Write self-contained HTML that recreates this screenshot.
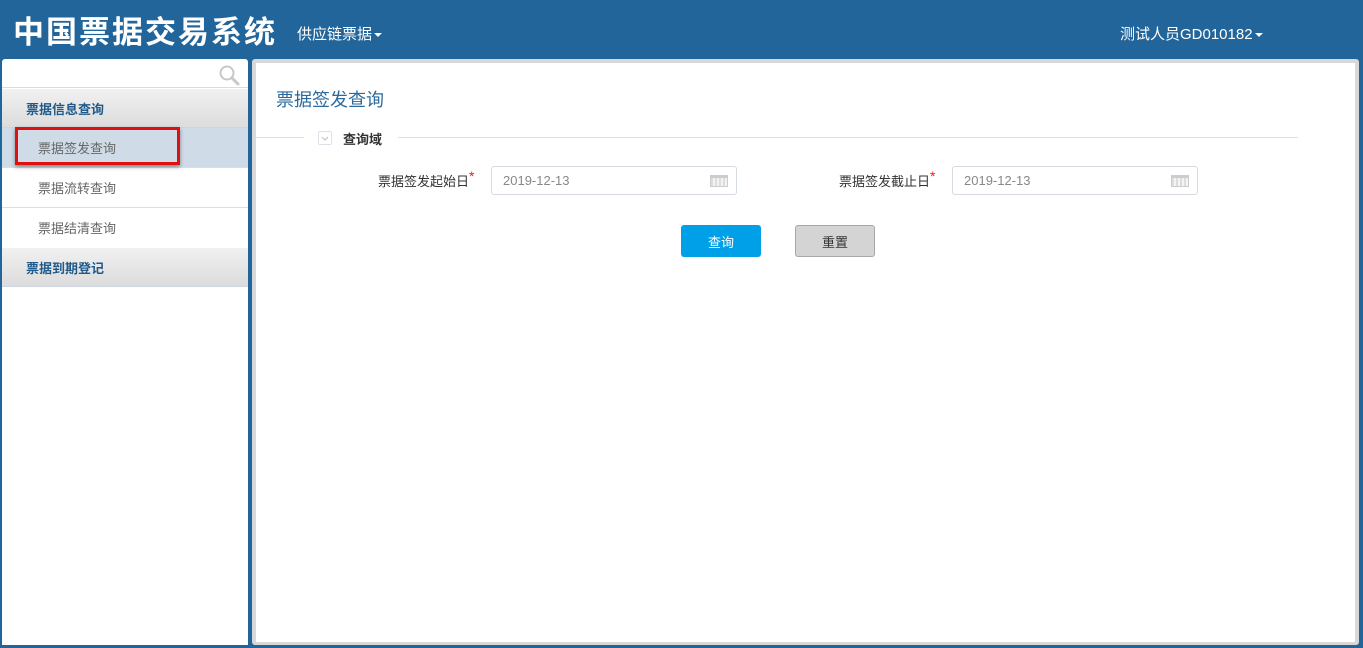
<!DOCTYPE html>
<html><head><meta charset="utf-8"><style>
*{margin:0;padding:0;box-sizing:border-box}
body{width:1363px;height:648px;background:#22659a;font-family:"Liberation Sans","Microsoft YaHei","Noto Sans CJK SC",sans-serif;position:relative;overflow:hidden;font-size:13px}
.abs{position:absolute}
.title{left:13px;top:7px;color:#fff;font-size:31px;font-weight:bold;letter-spacing:2px}
.nav{left:297px;top:23px;color:#fff;font-size:15px}
.user{left:1120px;top:23px;color:#fff;font-size:15px}
.caret{display:inline-block;width:0;height:0;border-left:4px solid transparent;border-right:4px solid transparent;border-top:4px solid #fff;vertical-align:middle;margin-left:2px}
.side{left:2px;top:59px;width:246px;height:586px;background:#fff;border-radius:3px 3px 0 0}
.search{left:0;top:0;width:246px;height:29px;border-bottom:1px solid #d8dde3}
.hdr{left:0;width:246px;height:39px;background:linear-gradient(#f1f1f1,#dcdcdc);color:#1f5a8a;font-weight:bold;font-size:13px;padding:10px 0 0 24px;border-bottom:1px solid #cdd6e0}
.item{left:0;width:246px;height:40px;color:#666;font-size:13px;padding:10px 0 0 36px;border-bottom:1px solid #d6e0ea}
.main{left:252px;top:59px;width:1107px;height:586px;background:#d8d8d8;border-radius:3px}
.inner{left:4px;top:4px;width:1099px;height:579px;background:#fff}
.inp{width:246px;height:29px;border:1px solid #d6dbe1;border-radius:3px;color:#888;font-size:13px;padding:6px 0 0 11px}
.lbl{font-size:13px;color:#333}
.star{color:#e02020;font-size:14px;position:relative;top:-5px}
.cal{position:absolute;right:8px;top:8px;width:18px;height:12px;border:1px solid #ccc;background:repeating-linear-gradient(90deg,#ddd 0 2px,#f4f4f4 2px 4px);border-top:3px solid #ccc}
.btn{height:32px;border-radius:3px;text-align:center;padding-top:7px;font-size:13px}
</style></head><body>
<div class="abs title">中国票据交易系统</div>
<div class="abs nav">供应链票据<span class="caret"></span></div>
<div class="abs user">测试人员GD010182<span class="caret"></span></div>

<div class="abs side">
 <div class="abs search">
  <svg class="abs" style="left:216px;top:5px" width="22" height="22" viewBox="0 0 22 22"><circle cx="9" cy="9" r="6.5" fill="none" stroke="#c8c8c8" stroke-width="2"/><path d="M14 14l6 6" stroke="#c8c8c8" stroke-width="3" stroke-linecap="round"/></svg>
 </div>
 <div class="abs hdr" style="top:30px">票据信息查询</div>
 <div class="abs item" style="top:69px;background:#cfdce8">票据签发查询</div>
 <div class="abs" style="left:13px;top:68px;width:165px;height:38px;border:3px solid #e01010;box-shadow:0 2px 4px rgba(0,0,0,.4)"></div>
 <div class="abs item" style="top:109px">票据流转查询</div>
 <div class="abs item" style="top:149px;border-bottom:none">票据结清查询</div>
 <div class="abs hdr" style="top:189px">票据到期登记</div>
</div>

<div class="abs main"><div class="abs inner">
 <div class="abs" style="left:20px;top:23px;font-size:18px;color:#2a6a9e">票据签发查询</div>
 <div class="abs" style="left:0;top:74px;width:48px;height:1px;background:#dcdfe3"></div>
 <div class="abs" style="left:142px;top:74px;width:900px;height:1px;background:#dcdfe3"></div>
 <div class="abs" style="left:62px;top:68px;width:14px;height:14px;border:1px solid #dde2e8;border-radius:2px"><svg width="12" height="12" viewBox="0 0 12 12" style="display:block"><path d="M3 5l3 3 3-3" fill="none" stroke="#b8c0ca"/></svg></div>
 <div class="abs" style="left:87px;top:66px;font-weight:bold;color:#333;font-size:13px">查询域</div>
 <div class="abs lbl" style="left:122px;top:108px">票据签发起始日<span class="star">*</span></div>
 <div class="abs inp" style="left:235px;top:103px">2019-12-13<span class="cal"></span></div>
 <div class="abs lbl" style="left:583px;top:108px">票据签发截止日<span class="star">*</span></div>
 <div class="abs inp" style="left:696px;top:103px">2019-12-13<span class="cal"></span></div>
 <div class="abs btn" style="left:425px;top:162px;width:80px;background:#00a0e9;color:#fff">查询</div>
 <div class="abs btn" style="left:539px;top:162px;width:80px;background:#d4d4d4;border:1px solid #a8a8a8;color:#333;padding-top:6px">重置</div>
</div></div>
</body></html>
